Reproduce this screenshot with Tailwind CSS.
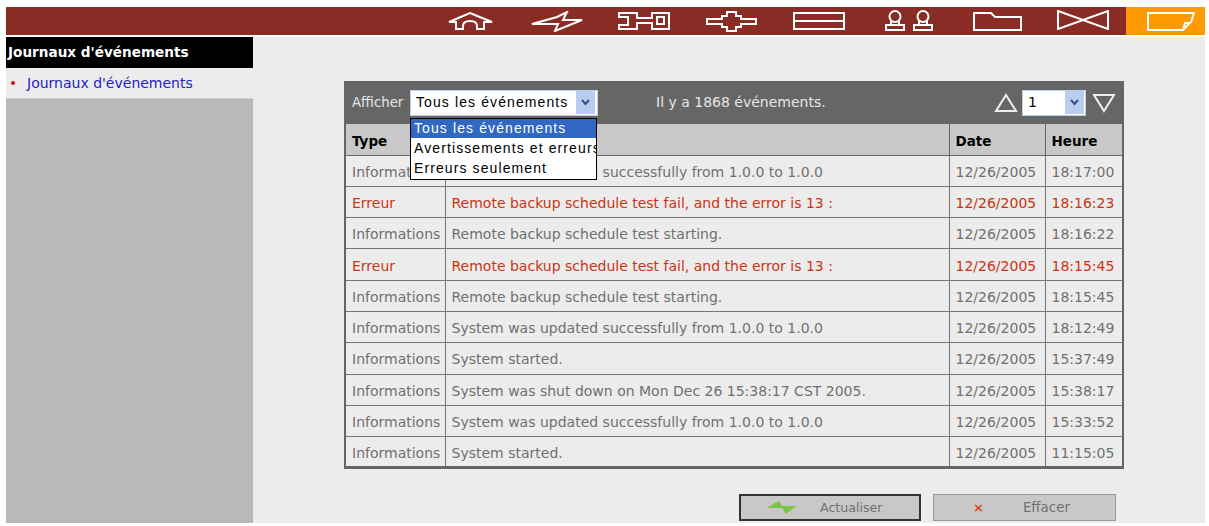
<!DOCTYPE html>
<html lang="fr">
<head>
<meta charset="UTF-8" />
<title>Journaux d'événements</title>
<script src="https://cdn.jsdelivr.net/npm/@tailwindcss/browser@4"></script>
</head>
<body class="bg-white h-[526px] overflow-hidden font-['DejaVu_Sans',sans-serif] text-[14px]">
  <div class="pl-[6px] pr-[4px] pt-[7px] h-[523px] flex flex-col">
    <!-- top nav -->
    <nav class="h-[28px] bg-[#8a2c26] flex shrink-0">
      <div class="flex-1 flex items-center pl-[442px]">
        <svg class="w-[45px] h-[18px]" viewBox="0 0 45 18" fill="none" stroke="#fff" stroke-width="2"><path d="M1 10 L22 1 L44 10 H36 V17 H29 V14 Q29 9 22 9 Q15 9 15 14 V17 H8 V10 Z"/></svg>
        <svg class="w-[52px] h-[21px] ml-[38px]" viewBox="0 0 52 21" fill="none" stroke="#fff" stroke-width="2"><path d="M1 13 L26 6 L36 1 L32 9 L51 9 L24 20 L27 13 Z"/></svg>
        <svg class="w-[52px] h-[18px] ml-[35px]" viewBox="0 0 52 18" fill="none" stroke="#fff" stroke-width="2"><path d="M1 1 H19 V6 H34 V1 H51 V17 H34 V11 H19 V17 H1 V13 H10 V5 H1 Z M39 5 H46 V12 H39 Z"/></svg>
        <svg class="w-[51px] h-[21px] ml-[36px]" viewBox="0 0 51 21" fill="none" stroke="#fff" stroke-width="2"><path d="M1 8 H16 V5 H21 V1 H30 V5 H35 V8 H50 V13 H35 V16 H30 V20 H21 V16 H16 V13 H1 Z"/></svg>
        <svg class="w-[52px] h-[18px] ml-[36px]" viewBox="0 0 52 18" fill="none" stroke="#fff" stroke-width="2"><path d="M1 1 H51 V17 H1 Z M1 9 H51"/></svg>
        <svg class="w-[48px] h-[21px] ml-[40px] -mt-[2px]" viewBox="0 0 48 21" fill="none" stroke="#fff" stroke-width="2"><circle cx="10" cy="6.5" r="5.5"/><path d="M6 11 V15 M14 11 V15 M1 15 H19 V20 H1 Z"/><circle cx="38" cy="6.5" r="5.5"/><path d="M34 11 V15 M42 11 V15 M29 15 H47 V20 H29 Z"/></svg>
        <svg class="w-[49px] h-[19px] ml-[40px] mt-[1px]" viewBox="0 0 49 19" fill="none" stroke="#fff" stroke-width="2"><path d="M1 1 H18 L22 5 H48 V18 H1 Z"/></svg>
        <svg class="w-[52px] h-[20px] ml-[35px] -mt-[2px]" viewBox="0 0 52 20" fill="none" stroke="#fff" stroke-width="2"><path d="M1 1 L26 10 L51 1 V19 L26 10 L1 19 Z"/></svg>
      </div>
      <div class="w-[79px] bg-[#ff9900] flex items-center pl-[21px]">
        <svg class="w-[48px] h-[19px] mt-[1px]" viewBox="0 0 48 19" fill="none" stroke="#fff" stroke-width="2"><path d="M1 1 H47 L44 10 L36 18 H1 Z M36 18 L38 11 H44"/></svg>
      </div>
    </nav>

    <div class="flex-1 flex mt-[2px] bg-[#ececec] min-h-0">
      <!-- sidebar -->
      <aside class="w-[247px] bg-[#b9b9b9] shrink-0">
        <h2 class="h-[31px] bg-black text-white font-bold text-[13.6px] leading-[31px] pl-[2px]">Journaux d'événements</h2>
        <div class="h-[31px] bg-[#ececec] flex items-center text-[#2222cc] border-b border-[#d0d0d0]">
          <span class="w-[4px] h-[4px] rounded-full bg-[#e01010] ml-[5px] mr-[12px]"></span>
          Journaux d'événements
        </div>
      </aside>

      <!-- main -->
      <main class="flex-1 pt-[44px] pl-[91px] text-[#707070]">
        <div class="w-[780px] relative">
          <div class="h-[43px] bg-[#666] pl-[8px] pr-[8px] flex items-center text-[#e6e6e6]">
            <span class="w-[58px] text-[13.3px]">Afficher</span>
            <div class="w-[188px] h-[26px] bg-white text-black flex items-center justify-between pl-[5px] pr-[2px] border border-[#bcd0e8] font-['Liberation_Sans',sans-serif] tracking-[1.1px] whitespace-nowrap">
              Tous les événements
              <span class="w-[19px] h-[23px] bg-[#b9cdf0] flex items-center justify-center"><svg class="w-[9px] h-[7px]" viewBox="0 0 9 7" fill="none" stroke="#33508f" stroke-width="2"><path d="M1 1 L4.5 5 L8 1"/></svg></span>
            </div>
            <span class="ml-[58px]">Il y a 1868 événements.</span>
            <div class="ml-auto flex items-center">
              <svg class="w-[24px] h-[20px]" viewBox="0 0 24 20" fill="none" stroke="#eee" stroke-width="2"><path d="M12 2 L22 18 H2 Z"/></svg>
              <div class="ml-[4px] w-[64px] h-[26px] bg-white text-black flex items-center justify-between pl-[5px] pr-[1px] border border-[#bcd0e8]">
                1
                <span class="w-[19px] h-[23px] bg-[#b9cdf0] flex items-center justify-center"><svg class="w-[9px] h-[7px]" viewBox="0 0 9 7" fill="none" stroke="#33508f" stroke-width="2"><path d="M1 1 L4.5 5 L8 1"/></svg></span>
              </div>
              <svg class="ml-[6px] w-[24px] h-[20px]" viewBox="0 0 24 20" fill="none" stroke="#eee" stroke-width="2"><path d="M12 18 L22 2 H2 Z"/></svg>
            </div>
          </div>

          <table class="w-full table-fixed border-collapse border-x-[2px] border-b-[3px] border-[#666] whitespace-nowrap">
            <colgroup><col class="w-[100px]"><col><col class="w-[96px]"><col class="w-[78px]"></colgroup>
            <thead class="bg-[#c8c8c8] text-black text-[13.5px]">
              <tr class="h-[31px]">
                <th class="text-left font-bold pl-[6px] pt-[3px] border-l border-b border-[#666]">Type</th>
                <th class="text-left font-bold pl-[6px] pt-[3px] border-l border-b border-[#666]"></th>
                <th class="text-left font-bold pl-[6px] pt-[3px] border-l border-b border-[#666]">Date</th>
                <th class="text-left font-bold pl-[6px] pt-[3px] border-l border-b border-[#666]">Heure</th>
              </tr>
            </thead>
            <tbody class="[&_td]:border [&_td]:border-[#777] [&_td]:pl-[6px] [&_td]:pt-[3px] [&_tr]:h-[31.3px] [&_td]:overflow-hidden">
              <tr><td>Informations</td><td>System was updated successfully from 1.0.0 to 1.0.0</td><td>12/26/2005</td><td>18:17:00</td></tr>
              <tr class="text-[#cc3311]"><td>Erreur</td><td>Remote backup schedule test fail, and the error is 13 :</td><td>12/26/2005</td><td>18:16:23</td></tr>
              <tr><td>Informations</td><td>Remote backup schedule test starting.</td><td>12/26/2005</td><td>18:16:22</td></tr>
              <tr class="text-[#cc3311]"><td>Erreur</td><td>Remote backup schedule test fail, and the error is 13 :</td><td>12/26/2005</td><td>18:15:45</td></tr>
              <tr><td>Informations</td><td>Remote backup schedule test starting.</td><td>12/26/2005</td><td>18:15:45</td></tr>
              <tr><td>Informations</td><td>System was updated successfully from 1.0.0 to 1.0.0</td><td>12/26/2005</td><td>18:12:49</td></tr>
              <tr><td>Informations</td><td>System started.</td><td>12/26/2005</td><td>15:37:49</td></tr>
              <tr><td>Informations</td><td>System was shut down on Mon Dec 26 15:38:17 CST 2005.</td><td>12/26/2005</td><td>15:38:17</td></tr>
              <tr><td>Informations</td><td>System was updated successfully from 1.0.0 to 1.0.0</td><td>12/26/2005</td><td>15:33:52</td></tr>
              <tr><td>Informations</td><td>System started.</td><td>12/26/2005</td><td>11:15:05</td></tr>
            </tbody>
          </table>

          <!-- open dropdown -->
          <ul class="absolute left-[66px] top-[37px] w-[187px] h-[62px] bg-white border border-black text-black font-['Liberation_Sans',sans-serif] tracking-[1.1px] leading-[20px] overflow-hidden whitespace-nowrap">
            <li class="bg-[#3168c4] text-white pl-[3px] -mb-[1px] h-[19px] leading-[18px]">Tous les événements</li>
            <li class="pl-[3px] pt-[1px]">Avertissements et erreurs</li>
            <li class="pl-[3px]">Erreurs seulement</li>
          </ul>

          <div class="flex mt-[25px]">
            <button class="ml-[395px] w-[182px] h-[27px] bg-[#c8c8c8] border-2 border-[#333] flex items-center">
              <svg class="ml-[27px] w-[28px] h-[13px]" viewBox="0 0 28 13" fill="#7cc544"><path d="M0 6 L11 0 L14 5 H28 L18 13 L14 7 H0 Z"/></svg>
              <span class="ml-[24px] text-[12.6px]">Actualiser</span>
            </button>
            <button class="ml-[12px] w-[183px] h-[27px] bg-[#c8c8c8] border border-[#999] flex items-center">
              <span class="ml-[39px] text-[#d2491e] font-bold text-[13px]">×</span>
              <span class="ml-[39px] text-[13.4px]">Effacer</span>
            </button>
          </div>
        </div>
      </main>
    </div>
  </div>
</body>
</html>
